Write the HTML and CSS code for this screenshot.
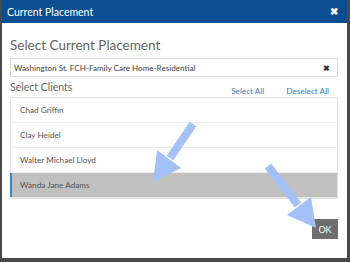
FILE: index.html
```html
<!DOCTYPE html>
<html lang="en">
<head>
    <meta charset="UTF-8">
    <title>Current Placement</title>
    <link rel="stylesheet" href="styles.css">
</head>
<body>
    <div class="modal">
        <div class="modal-header">
            <span class="modal-title">Current Placement</span>
            <span class="close">&#10006;</span>
        </div>
        <div class="modal-body">
            <h2>Select Current Placement</h2>
            <div class="placement-input">
                <span>Washington St. FCH-Family Care Home-Residential</span>
                <span class="clear">&#10006;</span>
            </div>
            <div class="clients-head">
                <span class="clients-title">Select Clients</span>
                <span class="links">
                    <a href="#">Select All</a>
                    <a href="#">Deselect All</a>
                </span>
            </div>
            <ul class="client-list">
                <li>Chad Griffin</li>
                <li>Clay Heidel</li>
                <li>Walter Michael Lloyd</li>
                <li class="selected">Wanda Jane Adams</li>
            </ul>
            <div class="modal-footer">
                <button class="ok-button">OK</button>
            </div>
        </div>
    </div>

    <!-- annotation arrows drawn over the dialog -->
    <svg class="arrows" width="350" height="262" viewBox="0 0 350 262">
        <line x1="193" y1="124" x2="170" y2="158" stroke="#a3c0f7" stroke-width="8"/>
        <polygon points="153,182 181,168 157,150" fill="#a3c0f7"/>
        <line x1="268" y1="166" x2="298" y2="205" stroke="#a3c0f7" stroke-width="8"/>
        <polygon points="316,228 311,197 287,215" fill="#a3c0f7"/>
    </svg>
</body>
</html>
```

FILE: styles.css
```css
body {
    margin: 0;
    background-color: #4a4a4a;
    font-family: Lato, "Open Sans", sans-serif;
    width: 350px;
    height: 262px;
    overflow: hidden;
}

.modal {
    width: 345px;
    height: 258px;
    margin-left: 2px;
    background-color: #fff;
}

.modal-header {
    height: 23px;
    background-color: #0b4e92;
    color: #fff;
    display: flex;
    justify-content: space-between;
    align-items: center;
    padding: 0 9px 0 5px;
}

.modal-title {
    font-size: 10.5px;
}

.close {
    font-size: 9.5px;
    font-weight: bold;
}

.modal-body {
    padding: 12px 9px 0 8px;
}

h2 {
    margin: 0 0 3px;
    font-size: 13.5px;
    font-weight: normal;
    color: #666;
    line-height: 20px;
}

.placement-input {
    height: 17px;
    border: 1px solid #ddd;
    display: flex;
    justify-content: space-between;
    align-items: center;
    padding: 0 7px 0 3px;
    font-size: 8.1px;
    color: #444;
}

.clear {
    font-size: 8px;
    font-weight: bold;
    color: #333;
}

.clients-head {
    display: flex;
    justify-content: space-between;
    align-items: center;
    height: 20px;
}

.clients-title {
    font-size: 10.5px;
    color: #666;
}

.links {
    padding-right: 9px;
}

.links a {
    font-size: 8.2px;
    color: #3a7cc0;
    text-decoration: none;
    margin-left: 18px;
}

.client-list {
    list-style: none;
    margin: 0;
    padding: 0;
    border: 1px solid #e4e4e4;
    border-bottom-width: 2px;
}

.client-list li {
    height: 24px;
    line-height: 24px;
    padding-left: 9px;
    font-size: 8.2px;
    color: #555;
    border-bottom: 1px solid #eee;
}

.client-list li:last-child {
    border-bottom: none;
}

.client-list li.selected {
    background-color: #c0c0c0;
    border-left: 2px solid #3a87c8;
    padding-left: 8px;
    margin-left: -1px;
}

.modal-footer {
    display: flex;
    justify-content: flex-end;
    padding-top: 20px;
}

.ok-button {
    width: 26px;
    height: 20px;
    padding: 0;
    border: none;
    background-color: #6d6d6d;
    color: #fff;
    font-family: Lato, sans-serif;
    font-size: 9px;
}

.arrows {
    position: absolute;
    left: 0;
    top: 0;
}
```
